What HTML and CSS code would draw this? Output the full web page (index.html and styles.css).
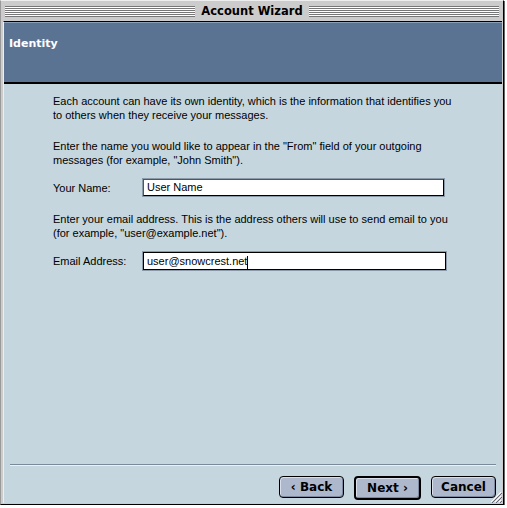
FILE: index.html
```html
<!DOCTYPE html>
<html>
<head>
<meta charset="utf-8">
<link rel="stylesheet" href="styles.css">
</head>
<body>
<div class="window">
  <div class="titlebar">
    <div class="stripes"></div>
    <div class="title">Account Wizard</div>
    <div class="stripes"></div>
  </div>
  <div class="frame">
    <div class="header">Identity</div>
    <div class="content">
      <p class="para">Each account can have its own identity, which is the information that identifies you<br>to others when they receive your messages.</p>
      <p class="para">Enter the name you would like to appear in the "From" field of your outgoing<br>messages (for example, "John Smith").</p>
      <div class="field">
        <span class="label">Your Name:</span>
        <div class="input">User Name</div>
      </div>
      <p class="para">Enter your email address. This is the address others will use to send email to you<br>(for example, "user@example.net").</p>
      <div class="field">
        <span class="label">Email Address:</span>
        <div class="input focus">user@snowcrest.net<span class="caret"></span></div>
      </div>
    </div>
    <div class="footer">
      <div class="sep"></div>
      <div class="buttons">
        <div class="btn">‹ Back</div>
        <div class="btn default">Next ›</div>
        <div class="btn">Cancel</div>
      </div>
      <svg class="grip" width="12" height="12" viewBox="0 0 12 12">
        <path d="M11 1 L1 11 M11 5 L5 11 M11 9 L9 11" stroke="#fff" stroke-width="1"/>
        <path d="M12 2 L2 12 M12 6 L6 12 M12 10 L10 12" stroke="#667" stroke-width="1"/>
      </svg>
    </div>
  </div>
</div>
</body>
</html>
```
FILE: styles.css
```css
html, body {
  margin: 0;
  padding: 0;
  background: #ffffff;
}
.window {
  width: 504px;
  height: 505px;
  background: #cccccc;
  border-right: 1px solid #000;
  border-bottom: 1px solid #000;
  box-shadow: 1px 1px 0 #666;
  display: flex;
  flex-direction: column;
  box-sizing: border-box;
  border-top: 1px solid #eee;
  border-left: 1px solid #999;
}
.titlebar {
  height: 20px;
  display: flex;
  align-items: center;
  padding: 0 4px 0 4px;
  gap: 4px;
}
.stripes {
  flex: 1;
  height: 11px;
  background: repeating-linear-gradient(to bottom, #777 0px, #777 1px, #fff 1px, #fff 2px);
}
.title {
  font-family: "DejaVu Sans", sans-serif;
  font-weight: bold;
  font-size: 11.5px;
  color: #000;
  padding: 0 2px;
}
.frame {
  flex: 1;
  margin: 0 1px 1px 2px;
  border-top: 1px solid #000;
  border-left: 1px solid #eee;
  background: #c6d6de;
  display: flex;
  flex-direction: column;
  position: relative;
}
.header {
  height: 62px;
  background: #5b7393;
  border-top: 1px solid #8aa0b8;
  border-bottom: 2px solid #000;
  color: #fff;
  font-family: "DejaVu Sans", sans-serif;
  font-weight: bold;
  font-size: 11px;
  padding: 14px 0 0 5px;
  box-sizing: border-box;
}
.content {
  flex: 1;
  padding: 11px 0 0 49px;
  font-family: "Liberation Sans", sans-serif;
  font-size: 11px;
  color: #000;
}
.para {
  margin: 0 0 18px 0;
  line-height: 13.5px;
}
.field {
  display: flex;
  align-items: center;
  margin: -6px 0 17px 0;
}
.label {
  width: 90px;
}
.input {
  width: 296px;
  height: 15px;
  background: #fff;
  border: 1px solid #000;
  border-top-color: #555;
  border-left-color: #555;
  box-shadow: 0 0 0 1px #8a9aa8;
  padding-left: 3px;
  line-height: 15px;
}
.input.focus {
  width: 298px;
  height: 16px;
  line-height: 16px;
  border: 1px solid #000;
}
.caret {
  display: inline-block;
  width: 1px;
  height: 13px;
  background: #000;
  vertical-align: middle;
}
.footer {
  padding: 0 6px 3px 6px;
  position: relative;
}
.sep {
  height: 1px;
  background: #7a8a9a;
  border-bottom: 1px solid #eef;
  margin: 0 0 10px 0;
}
.buttons {
  display: flex;
  justify-content: flex-end;
  gap: 10px;
}
.btn {
  width: 63px;
  height: 20px;
  border: 1px solid #000;
  border-radius: 4px;
  background: #adb8cc;
  box-shadow: inset 1px 1px 0 #d8dfea, inset -1px -1px 0 #7d8aa0;
  font-family: "DejaVu Sans", sans-serif;
  font-weight: bold;
  font-size: 12px;
  text-align: center;
  line-height: 20px;
  color: #000;
}
.btn.default {
  border-width: 2px;
}
.grip {
  position: absolute;
  right: 0;
  bottom: 0;
}
```
